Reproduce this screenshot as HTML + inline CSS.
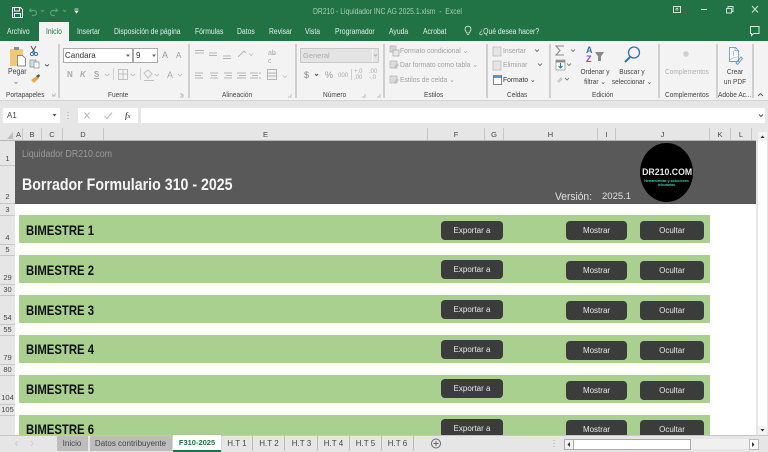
<!DOCTYPE html>
<html><head><meta charset="utf-8"><style>
html,body{margin:0;padding:0;background:#fff}
#p{position:relative;width:768px;height:452px;overflow:hidden;background:#fff;font-family:"Liberation Sans",sans-serif;font-size:8px;color:#333;filter:blur(.3px)}
#p div,#p span{position:absolute;white-space:nowrap}
.t{color:#e4efe8;font-size:8px;top:26px;line-height:11px;transform:scaleX(.85);transform-origin:0 0}
.g{color:#a0a0a0;font-size:7.5px;line-height:10px;transform:scaleX(.9);transform-origin:0 0}
.l{color:#444;font-size:7.5px;top:90px;line-height:10px;transform:scaleX(.87);transform-origin:0 0}
.c{transform:scaleX(.87);text-align:center}
.sep{width:1.5px;background:#cfcfcf;top:44px;height:54px}
.ch{top:128px;height:13px;line-height:13px;text-align:center;font-size:7.5px;color:#444;border-right:1px solid #c6c6c6;box-sizing:border-box;background:#e6e6e6}
.rh{left:0;width:15px;text-align:center;font-size:7.5px;color:#444;line-height:10px;border-bottom:1px solid #c6c6c6;box-sizing:border-box;background:#e6e6e6}
.bar{left:19px;width:691px;background:#a9d08e;height:28px}
.bt{font-size:14px;font-weight:bold;color:#111;left:26px;line-height:18px;transform:scaleX(.81);transform-origin:0 0}
.b{background:#3c3c3c;border-radius:4px;color:#e8e8e8;font-size:8px;text-align:center;height:19px;line-height:19px}
.tab{top:436px;height:15px;line-height:15px;font-size:8px;color:#444;text-align:center;border-right:1px solid #bbb;box-sizing:border-box}
</style></head><body><div id="p">

<!-- title bar -->
<div style="left:0;top:0;width:768px;height:41px;background:#217346"></div>
<svg style="position:absolute;left:0;top:0" width="768" height="41" fill="none">
<path d="M12.500 7.500h8l2 2v8h-10z" stroke="#fff" stroke-width="1"/><path d="M14.500 8v3h5V8M14.500 17v-3.500h6V17" stroke="#fff" stroke-width="1"/>
<path d="M31 8.500l-1.500 2 2 1.500M30 10.500h4a2.500 2.500 0 0 1 0 5h-2" stroke="#5d9c79" stroke-width="1.200"/>
<path d="M56 8.500l1.500 2-2 1.500M57 10.500h-4a2.500 2.500 0 0 0 0 5h2" stroke="#5d9c79" stroke-width="1.200"/>
<path d="M41 10l1.500 1.500L44 10M63 10l1.500 1.500L66 10" stroke="#5d9c79"/>
<path d="M74.500 9h4M75 11h3l-1.500 2z" stroke="#fff" stroke-width=".8" fill="#fff"/>
<rect x="673.500" y="6.500" width="7" height="6" stroke="#cfe0d6"/><path d="M677 11V8M675.500 9.500L677 8l1.500 1.500" stroke="#cfe0d6" stroke-width=".8"/>
<path d="M701 9.500h6" stroke="#cfe0d6"/>
<rect x="726.500" y="8.500" width="5" height="4.500" stroke="#cfe0d6"/><path d="M728 8V6.500h5v5h-1.500" stroke="#cfe0d6"/>
<path d="M752 6l6 6.500M758 6l-6 6.500" stroke="#cfe0d6"/>
<path d="M750.500 26.500h8.500v7h-5.500l-2 2v-2h-1z" stroke="#dce9e1"/>
<path d="M467 34.500h2M466.500 33c0-1.500-1.500-2-1.500-3.800a3 3 0 0 1 6 0c0 1.800-1.500 2.300-1.500 3.800z" stroke="#dce9e1" stroke-width=".8"/>
</svg>
<div style="left:313px;top:6px;line-height:11px;font-size:8px;color:#a9cdb8;transform:scaleX(.85);transform-origin:0 0">DR210 - Liquidador INC AG 2025.1.xlsm &nbsp;- &nbsp;Excel</div>

<div style="left:39px;top:22px;width:30px;height:20px;background:#f3f3f3"></div>
<div class="t" style="left:7px">Archivo</div>
<div class="t" style="left:46px;color:#217346">Inicio</div>
<div class="t" style="left:77px">Insertar</div>
<div class="t" style="left:114px">Disposición de página</div>
<div class="t" style="left:195px">Fórmulas</div>
<div class="t" style="left:237px">Datos</div>
<div class="t" style="left:269px">Revisar</div>
<div class="t" style="left:305px">Vista</div>
<div class="t" style="left:335px">Programador</div>
<div class="t" style="left:389px">Ayuda</div>
<div class="t" style="left:423px">Acrobat</div>
<div class="t" style="left:479px">¿Qué desea hacer?</div>

<!-- ribbon -->
<div style="left:0;top:41px;width:768px;height:59px;background:#f3f3f3"></div>
<div style="left:0;top:100px;width:768px;height:1px;background:#d4d4d4"></div>
<div style="left:0;top:101px;width:768px;height:27px;background:#e6e6e6"></div>
<div class="sep" style="left:58px"></div><div class="sep" style="left:188px"></div><div class="sep" style="left:295px"></div><div class="sep" style="left:383px"></div><div class="sep" style="left:486px"></div><div class="sep" style="left:549px"></div><div class="sep" style="left:658px"></div><div class="sep" style="left:716px"></div><div class="sep" style="left:752px"></div>

<svg style="position:absolute;left:0;top:41px" width="768" height="60" fill="none">
<!-- paste -->
<rect x="10" y="8" width="13" height="17" fill="#f0c878"/><rect x="14" y="6" width="5" height="3" fill="#8a8a8a"/><path d="M17.500 14.500h5l3 3v7.500h-8z" fill="#fff" stroke="#666" stroke-width=".7"/>
<path d="M31 5l4 7M36 5l-4 7" stroke="#555"/><circle cx="32" cy="13" r="1.600" stroke="#2c72b8"/><circle cx="36" cy="13" r="1.600" stroke="#2c72b8"/>
<rect x="30" y="19" width="6" height="7" fill="#cfe0ee" stroke="#777" stroke-width=".6"/><rect x="34" y="21" width="5" height="6" fill="#fff" stroke="#777" stroke-width=".6"/>
<path d="M45 23.500l2 1.500 2-1.500" stroke="#555"/>
<path d="M31 39l6-4 2 2-5 5z" fill="#e8a93a"/><path d="M36 35l3-2 1 2-2 2z" fill="#555"/>
<path d="M14.500 41l1.500 1.500 1.500-1.500" stroke="#777" stroke-width=".7"/>
<path d="M52 53l2 2M52 55h3V52M183 53v3h-3M180 53h2v2M365 53v3h-3M380 53v3h-3M291 53v3h-3" stroke="#aaa" stroke-width=".7"/>
<!-- font row -->
<rect x="63.500" y="7.500" width="69" height="14" fill="#fff" stroke="#aaa"/><rect x="133.500" y="7.500" width="24" height="14" fill="#fff" stroke="#aaa"/>
<path d="M126 13.500h4l-2 2.500zM152 13.500h4l-2 2.500z" fill="#666"/>
<!-- align -->
<path d="M195 9.500h9M195 12h9M209 12h8M209 14.500h8M223 15h8M223 17.500h8M195 32h8M195 34.500h6M195 37h8M210 32h8M211 34.500h6M210 37h8M224 32h8M226 34.500h6M224 37h8M237 32h9M239 34.500h7M237 37h9M250 32h8M252 34.500h6M250 37h8" stroke="#b4b4b4"/>
<path d="M238 16l6-6M244 10l2 2" stroke="#b4b4b4"/>
<path d="M249 12.500l2 2 2-2M283 34.500l2 2 2-2M276 13h-4" stroke="#bbb" stroke-width=".8"/>
<!-- merge -->
<rect x="267.500" y="28.500" width="9" height="10" stroke="#b4b4b4"/><path d="M268 32h8M268 35h8" stroke="#b4b4b4"/><path d="M259 32h2M259 37h2" stroke="#b4b4b4"/>
<!-- font grey -->
<rect x="118.500" y="28.500" width="9" height="10" stroke="#c0c0c0"/><path d="M123 28v10M118 33h9" stroke="#c0c0c0"/>
<path d="M105 33l2 2 2-2M131 33l2 2 2-2M155 33l2 2 2-2M178 33l2 2 2-2" stroke="#bbb" stroke-width=".8"/>
<path d="M113.500 27v12M140.500 27v12" stroke="#d0d0d0"/>
<path d="M144 32l4-3 4 4-4 4zM144 39.500h10" stroke="#c0c0c0"/>
<!-- numero -->
<rect x="300.500" y="7.500" width="78" height="14" fill="#e4e4e4" stroke="#c8c8c8"/><path d="M372.500 8v13" stroke="#f5f5f5"/><path d="M374 13.500l1.500 1.500 1.500-1.500" stroke="#b0b0b0"/>
<path d="M315 33l1.500 1.500L318 33" stroke="#555"/><path d="M351.500 28v11" stroke="#d0d0d0"/>
<!-- styles icons -->
<rect x="390" y="5" width="6" height="6" fill="#d5d5d5" stroke="#aaa" stroke-width=".6"/><rect x="393" y="9" width="6" height="6" fill="#e8e8e8" stroke="#999" stroke-width=".6"/>
<rect x="390" y="20" width="7" height="7" fill="#dcdcdc" stroke="#aaa" stroke-width=".6"/><path d="M393 27l4-5 2 2-4 4z" fill="#c2c2c2"/>
<rect x="390" y="35" width="7" height="7" fill="#dcdcdc" stroke="#aaa" stroke-width=".6"/><path d="M393 42l4-5 2 2-4 4z" fill="#c2c2c2"/>
<!-- celdas icons -->
<rect x="493" y="6" width="8" height="9" fill="#e5e5e5" stroke="#aaa" stroke-width=".6"/><rect x="493" y="20" width="8" height="9" fill="#e5e5e5" stroke="#aaa" stroke-width=".6"/>
<rect x="493.500" y="34.500" width="8" height="9" fill="#fff" stroke="#555" stroke-width=".7"/><path d="M493 36h9" stroke="#2c72b8" stroke-width="1.500"/>
<path d="M535 8.500l2 2 2-2M538 22.500l2 2 2-2" stroke="#555" stroke-width=".8"/>
<!-- edicion -->
<path d="M564 5h-8l4 4.500-4 4.500h8" stroke="#8a8a8a" stroke-width="1.100"/>
<rect x="556" y="19" width="9" height="10" fill="#fff" stroke="#888" stroke-width=".7"/><path d="M556 20.500h9" stroke="#888" stroke-width="2"/><path d="M560.500 22v5M558.500 25l2 2 2-2" stroke="#2c72b8" stroke-width="1.100"/>
<path d="M557 40l4-4 2 2-4 4z" fill="#ccc"/>
<path d="M571 8.500l2 2 2-2M567 22.500l2 2 2-2M565 37l2 2 2-2" stroke="#666" stroke-width=".8"/>
<path d="M595 11h9l-3 4.500v4.500h-3v-4.500z" fill="#8a8a8a"/>
<circle cx="634" cy="11.500" r="5.500" stroke="#2c72b8" stroke-width="1.300"/><path d="M630 16l-5 5" stroke="#2c72b8" stroke-width="2"/>
<circle cx="686" cy="13" r="2.800" fill="#cfcfcf"/>
<!-- pdf -->
<path d="M729.500 6.500h6l3 3v11h-9z" stroke="#6f9ed6" fill="#fff" stroke-width=".9"/><path d="M735 6.500v3h3" stroke="#6f9ed6" stroke-width=".7"/><path d="M733 15c1-3 1-4 .5-5M730 19c2-2 5-3 8-3" stroke="#6f9ed6" stroke-width=".6"/>
<path d="M736 22l5-6 1.500 1.500-5 6z" stroke="#5f8fd0" stroke-width=".9"/>
<path d="M758 55l2.500-2.500 2.500 2.500" stroke="#555" stroke-width=".9"/>
</svg>

<div class="l" style="left:8px;top:67px;font-size:8px">Pegar</div>
<div style="left:65px;top:50px;font-size:8px;line-height:12px;color:#333">Candara</div>
<div style="left:136px;top:50px;font-size:8px;line-height:12px;color:#333">9</div>
<div style="left:162px;top:49px;font-size:9px;line-height:12px;color:#9a9a9a">A</div>
<div style="left:176px;top:50px;font-size:8px;line-height:12px;color:#9a9a9a">A</div>
<div style="left:67px;top:69px;font-size:8px;line-height:12px;color:#aaa;font-weight:bold">N</div>
<div style="left:80px;top:69px;font-size:8px;line-height:12px;color:#aaa;font-weight:bold;font-style:italic">K</div>
<div style="left:94px;top:69px;font-size:8px;line-height:12px;color:#aaa;font-weight:bold;text-decoration:underline">S</div>
<div style="left:167px;top:69px;font-size:9px;line-height:12px;color:#aaa">A</div>
<div style="left:268px;top:50px;font-size:7px;line-height:8px;color:#aaa">ab<br>c</div>
<div style="left:303px;top:50px;font-size:7.500px;line-height:12px;color:#aaa">General</div>
<div style="left:304px;top:69px;font-size:9px;line-height:12px;color:#888">$</div>
<div style="left:325px;top:69px;font-size:9px;line-height:12px;color:#999">%</div>
<div style="left:338px;top:71px;font-size:6px;line-height:10px;color:#aaa">000</div>
<div style="left:354px;top:69px;font-size:6px;line-height:6px;color:#aaa">+,0<br>,00</div>
<div style="left:369px;top:69px;font-size:6px;line-height:6px;color:#aaa">,00<br>-,0</div>
<div class="g" style="left:400px;top:46px">Formato condicional ⌄</div>
<div class="g" style="left:400px;top:60px">Dar formato como tabla ⌄</div>
<div class="g" style="left:400px;top:75px">Estilos de celda ⌄</div>
<div class="g" style="left:503px;top:46px">Insertar</div>
<div class="g" style="left:503px;top:60px">Eliminar</div>
<div class="g" style="left:503px;top:75px;color:#333">Formato ⌄</div>
<div style="left:586px;top:46px;font-size:9px;line-height:9px;color:#2c72b8;font-weight:bold">A</div>
<div style="left:586px;top:55px;font-size:9px;line-height:9px;color:#8e44c4;font-weight:bold">Z</div>
<div class="c" style="left:570px;top:67px;width:50px;font-size:7.500px;line-height:10px;color:#444">Ordenar y<br>filtrar ⌄</div>
<div class="c" style="left:607px;top:67px;width:50px;font-size:7.500px;line-height:10px;color:#444">Buscar y<br>seleccionar ⌄</div>
<div class="c" style="left:661px;top:67px;width:52px;font-size:7.500px;line-height:10px;color:#b0b0b0">Complementos</div>
<div class="c" style="left:715px;top:67px;width:40px;font-size:7.500px;line-height:10px;color:#444">Crear<br>un PDF</div>

<div class="l" style="left:6px">Portapapeles</div><div class="l" style="left:108px">Fuente</div><div class="l" style="left:222px">Alineación</div><div class="l" style="left:323px">Número</div><div class="l" style="left:424px">Estilos</div><div class="l" style="left:507px">Celdas</div><div class="l" style="left:592px">Edición</div><div class="l" style="left:665px">Complementos</div><div class="l" style="left:718px;width:39px;overflow:hidden">Adobe Ac...</div>

<!-- formula bar -->
<div style="left:3px;top:108px;width:57px;height:15px;background:#fff;font-size:8px;line-height:15px;color:#444;text-indent:4px">A1</div>
<div style="left:78px;top:108px;width:60px;height:15px;background:#fff"></div>
<div style="left:141px;top:108px;width:624px;height:15px;background:#fff"></div>
<svg style="position:absolute;left:0;top:101px" width="768" height="27" fill="none">
<path d="M52.500 13l2 2.500 2-2.500z" fill="#555"/>
<path d="M68 11v1M68 14v1M68 17v1" stroke="#aaa"/>
<path d="M84.500 11.500l5 6M89.500 11.500l-5 6" stroke="#bbb" stroke-width="1.100"/>
<path d="M104.500 15l2.500 2.500 5-6" stroke="#bbb" stroke-width="1.100"/>
<path d="M759 13.500l2 2 2-2" stroke="#555"/>
</svg>
<div style="left:125px;top:108px;font-size:8px;line-height:15px;font-style:italic;font-family:'Liberation Serif',serif;color:#555;font-weight:bold">f<span style="position:static;font-size:6px">x</span></div>

<!-- column headers -->
<div style="left:0;top:128px;width:768px;height:13px;background:#e6e6e6"></div>
<div class="ch" style="left:15px;width:8px">A</div><div class="ch" style="left:23px;width:19px">B</div><div class="ch" style="left:42px;width:21px">C</div><div class="ch" style="left:63px;width:41px">D</div><div class="ch" style="left:104px;width:324px">E</div><div class="ch" style="left:428px;width:57px">F</div><div class="ch" style="left:485px;width:19px">G</div><div class="ch" style="left:504px;width:94px">H</div><div class="ch" style="left:598px;width:18px">I</div><div class="ch" style="left:616px;width:94px">J</div><div class="ch" style="left:710px;width:21px">K</div><div class="ch" style="left:731px;width:21px">L</div>
<svg style="position:absolute;left:0;top:128px" width="16" height="13"><path d="M13 4v7H7z" fill="#bdbdbd"/></svg>
<div style="left:0;top:140px;width:757px;height:1px;background:#b5b5b5"></div>

<!-- row headers -->
<div style="left:0;top:141px;width:15px;height:295px;background:#e6e6e6"></div>
<div class="rh" style="top:141px;height:25px;padding-top:13px">1</div>
<div class="rh" style="top:166px;height:38px;padding-top:26px">2</div>
<div class="rh" style="top:204px;height:12px;padding-top:1px">3</div>
<div class="rh" style="top:216px;height:29px;padding-top:17px">4</div>
<div class="rh" style="top:245px;height:11px">5</div>
<div class="rh" style="top:256px;height:29px;padding-top:17px">29</div>
<div class="rh" style="top:285px;height:11px">30</div>
<div class="rh" style="top:296px;height:29px;padding-top:17px">54</div>
<div class="rh" style="top:325px;height:11px">55</div>
<div class="rh" style="top:336px;height:29px;padding-top:17px">79</div>
<div class="rh" style="top:365px;height:11px">80</div>
<div class="rh" style="top:376px;height:29px;padding-top:17px">104</div>
<div class="rh" style="top:405px;height:11px">105</div>
<div class="rh" style="top:416px;height:20px;border:0;padding-top:17px">129</div>

<!-- sheet header -->
<div style="left:15px;top:141px;width:741px;height:63px;background:#595959"></div>
<div style="left:22px;top:148px;font-size:10px;line-height:13px;color:#9b9b9b;transform:scaleX(.88);transform-origin:0 0">Liquidador DR210.com</div>
<div style="left:22px;top:175px;font-size:16.500px;font-weight:bold;line-height:20px;color:#f5f5f5;transform:scaleX(.86);transform-origin:0 0">Borrador Formulario 310 - 2025</div>
<div style="left:555px;top:190px;font-size:11px;line-height:14px;color:#e0e0e0;transform:scaleX(.93);transform-origin:0 0">Versión:</div>
<div style="left:602px;top:190px;font-size:9.500px;line-height:14px;color:#e0e0e0">2025.1</div>
<div style="left:640px;top:143px;width:53px;height:59px;border-radius:50%;background:#000"></div>
<div style="left:640px;top:167px;width:53px;text-align:center;font-size:9.500px;line-height:11px;font-weight:bold;color:#e8e8e8;transform:scaleX(.92)">DR210.COM</div>
<div style="left:640px;top:179px;width:53px;text-align:center;font-size:3.500px;line-height:4px;color:#27d8a8;font-weight:bold">Herramientas y soluciones<br>tributarias</div>

<!-- bars -->
<div class="bar" style="top:215px"></div><div class="bar" style="top:255px"></div><div class="bar" style="top:295px"></div><div class="bar" style="top:335px"></div><div class="bar" style="top:375px"></div><div class="bar" style="top:415px"></div>
<div class="bt" style="top:221px">BIMESTRE 1</div><div class="bt" style="top:261px">BIMESTRE 2</div><div class="bt" style="top:301px">BIMESTRE 3</div><div class="bt" style="top:340px">BIMESTRE 4</div><div class="bt" style="top:380px">BIMESTRE 5</div><div class="bt" style="top:420px">BIMESTRE 6</div>

<div class="b" style="left:441px;top:221px;width:62px">Exportar a</div><div class="b" style="left:566px;top:221px;width:61px">Mostrar</div><div class="b" style="left:640px;top:221px;width:64px">Ocultar</div>
<div class="b" style="left:441px;top:260px;width:62px">Exportar a</div><div class="b" style="left:566px;top:261px;width:61px">Mostrar</div><div class="b" style="left:640px;top:261px;width:64px">Ocultar</div>
<div class="b" style="left:441px;top:300px;width:62px">Exportar a</div><div class="b" style="left:566px;top:301px;width:61px">Mostrar</div><div class="b" style="left:640px;top:301px;width:64px">Ocultar</div>
<div class="b" style="left:441px;top:340px;width:62px">Exportar a</div><div class="b" style="left:566px;top:341px;width:61px">Mostrar</div><div class="b" style="left:640px;top:341px;width:64px">Ocultar</div>
<div class="b" style="left:441px;top:379px;width:62px">Exportar a</div><div class="b" style="left:566px;top:381px;width:61px">Mostrar</div><div class="b" style="left:640px;top:381px;width:64px">Ocultar</div>
<div class="b" style="left:441px;top:419px;width:62px">Exportar a</div><div class="b" style="left:566px;top:420px;width:61px">Mostrar</div><div class="b" style="left:640px;top:420px;width:64px">Ocultar</div>

<!-- vertical scrollbar -->
<div style="left:756px;top:128px;width:12px;height:308px;background:#e6e6e6"></div>
<div style="left:758px;top:132px;width:9px;height:303px;background:#fff"></div>
<div style="left:758px;top:132px;width:9px;height:9px;background:#f2f2f2"></div>
<div style="left:758px;top:426px;width:9px;height:9px;background:#f2f2f2"></div>
<svg style="position:absolute;left:758px;top:132px" width="9" height="303"><path d="M2.500 6l2-2.500 2 2.500zM2.500 297l2 2.500 2-2.500z" fill="#333"/></svg>

<!-- bottom tabs -->
<div style="left:0;top:435px;width:768px;height:17px;background:#e6e6e6"></div>
<div style="left:0;top:434.500px;width:768px;height:1px;background:#c6c6c6"></div>
<svg style="position:absolute;left:0;top:435px" width="60" height="17"><path d="M17.500 6l-2 2.500 2 2.500M31 6l2 2.500-2 2.500" stroke="#ccc" fill="none"/></svg>
<div class="tab" style="left:57px;top:436px;width:31px;background:#bdbdbd">Inicio</div>
<div class="tab" style="left:90px;top:436px;width:82px;background:#bdbdbd">Datos contribuyente</div>
<div class="tab" style="left:173px;top:435px;width:48px;height:17px;line-height:16px;background:#fff;color:#217346;font-weight:bold;font-size:7.500px;border:0;border-bottom:2px solid #217346;box-shadow:0 0 1px #999">F310-2025</div>
<div class="tab" style="left:222px;width:31px">H.T 1</div>
<div class="tab" style="left:254px;width:31px">H.T 2</div>
<div class="tab" style="left:286px;width:32px">H.T 3</div>
<div class="tab" style="left:318px;width:32px">H.T 4</div>
<div class="tab" style="left:350px;width:32px">H.T 5</div>
<div class="tab" style="left:382px;width:32px">H.T 6</div>
<svg style="position:absolute;left:430px;top:438px" width="12" height="12" fill="none"><circle cx="6" cy="5.500" r="4.500" stroke="#666"/><path d="M3.500 5.500h5M6 3v5" stroke="#666"/></svg>

<!-- h scrollbar -->
<div style="left:564px;top:439px;width:194px;height:10px;background:#f0f0f0"></div>
<div style="left:564px;top:439px;width:125px;height:9px;background:#fff;border:1px solid #aaa"></div>
<div style="left:564px;top:439px;width:8px;height:9px;background:#f2f2f2;border:1px solid #aaa"></div>
<div style="left:749px;top:439px;width:8px;height:9px;background:#fff;border:1px solid #bbb"></div>
<svg style="position:absolute;left:564px;top:439px" width="194" height="11"><path d="M6 3l-2.500 2.500L6 8zM188 3l2.500 2.500L188 8z" fill="#333"/></svg>
<svg style="position:absolute;left:552px;top:439px" width="4" height="11"><path d="M2 1v1M2 4v1M2 7v1" stroke="#aaa"/></svg>
</div></body></html>
